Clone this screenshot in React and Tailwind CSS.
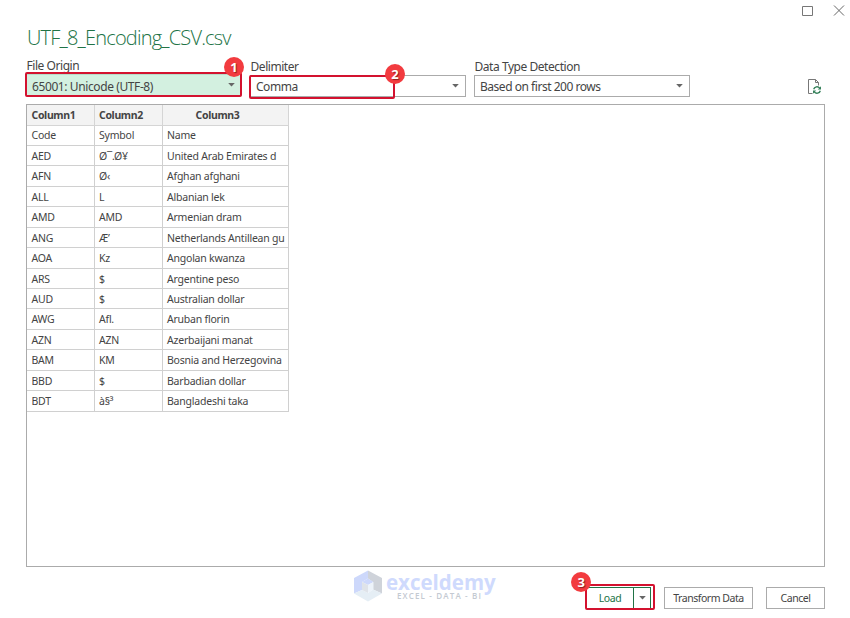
import { useState } from 'react';

const columns = ['Column1', 'Column2', 'Column3'];

const rows = [
  ['Code', 'Symbol', 'Name'],
  ['AED', 'Ø¯.Ø¥', 'United Arab Emirates d'],
  ['AFN', 'Ø‹', 'Afghan afghani'],
  ['ALL', 'L', 'Albanian lek'],
  ['AMD', 'AMD', 'Armenian dram'],
  ['ANG', 'Æ’', 'Netherlands Antillean gu'],
  ['AOA', 'Kz', 'Angolan kwanza'],
  ['ARS', '$', 'Argentine peso'],
  ['AUD', '$', 'Australian dollar'],
  ['AWG', 'Afl.', 'Aruban florin'],
  ['AZN', 'AZN', 'Azerbaijani manat'],
  ['BAM', 'KM', 'Bosnia and Herzegovina'],
  ['BBD', '$', 'Barbadian dollar'],
  ['BDT', 'à§³', 'Bangladeshi taka'],
];

function Caret() {
  return (
    <svg width="7" height="4" viewBox="0 0 7 4" className="shrink-0">
      <path d="M0.2 0h6.6L3.5 3.6z" fill="#666" />
    </svg>
  );
}

function Badge({ children, className }) {
  return (
    <span
      className={`absolute z-10 flex size-5 items-center justify-center rounded-full bg-[#f23b3f] font-['Open_Sans',sans-serif] text-[13px] font-bold leading-none text-white [text-shadow:1px_1px_1px_#8b2020] ${className}`}
    >
      {children}
    </span>
  );
}

function Field({ label, value, className, selectClass, valueClass = 'pt-px', children }) {
  return (
    <div className={`relative w-[216px] ${className}`}>
      <div className="h-4 pl-[0.5px] text-[12px] leading-4 tracking-[-0.45px]">{label}</div>
      <button
        type="button"
        className={`flex h-[22px] w-full items-center justify-between border pl-[5px] pr-[6px] text-left text-[12px] tracking-[-0.47px] ${selectClass}`}
      >
        <span className={valueClass}>{value}</span>
        <Caret />
      </button>
      {children}
    </div>
  );
}

function Logo() {
  return (
    <div className="flex items-center gap-[4.5px]">
      <svg width="28" height="32" viewBox="0 0 28 32">
        <path d="M14 0.5 0 8v15.5l8-3.5v-8l6-3.5z" fill="#cdd8fb" />
        <path d="M14 0.5 28 8v15.5l-9-4V12l-5-3.5z" fill="#cfd3da" />
        <path d="M0 23.5l8-3.5 6 3 5-3.5 9 4-14 8z" fill="#e5eef5" />
        <path d="M14 8.5l5.500 3.500L14 15l-6-3z" fill="#cdd8fb" />
        <path d="M8 12l6 3v8l-6-3z" fill="#dfe3e9" />
        <path d="M19.500 12L14 15v8l5.500-3.500z" fill="#edf3fa" />
      </svg>
      <div className="font-['Open_Sans',sans-serif]">
        <div className="h-[21px] text-[20.5px] font-bold leading-[22px] text-[#cfdafd]">exceldemy</div>
        <div className="h-[9px] pl-[11px] text-[8px] font-semibold leading-[8px] tracking-[1.15px] text-[#c4cad2]">
          EXCEL - DATA - BI
        </div>
      </div>
    </div>
  );
}

export default function App() {
  const [activeRow, setActiveRow] = useState(null);

  return (
    <div className="flex h-[618px] w-[850px] flex-col overflow-hidden bg-white pl-[26px] pr-[25px] font-['Noto_Sans','Open_Sans',sans-serif] text-[#444]">
      <div className="-mr-[20px] flex h-[22px] shrink-0 items-start justify-end gap-[20px] pt-[5px]">
        <svg width="12" height="12" viewBox="0 0 12 12" fill="none" stroke="#777">
          <path d="M1.5 1.5h10v9h-10z" />
        </svg>
        <svg width="12" height="12" viewBox="0 0 12 12" fill="none" stroke="#666">
          <path d="M1 0.5l10 10M11 0.5l-10 10" />
        </svg>
      </div>

      <h1 className="h-[36px] shrink-0 pl-px font-['Open_Sans',sans-serif] text-[20px] font-light leading-[31px] tracking-[-0.8px] text-[#217346]">
        UTF_8_Encoding_CSV.csv
      </h1>

      <div className="flex h-[46px] shrink-0 items-start gap-2">
        <Field
          label="File Origin"
          value="65001: Unicode (UTF-8)"
          selectClass="border-[#b7ddca] bg-[#d3f0e0]"
          valueClass="pt-[3px] tracking-[-0.4px]"
        >
          <span className="absolute -left-px top-[14px] h-[25px] w-[217px] rounded-[2px] border-2 border-[#d3122f]" />
          <Badge className="-top-[1px] left-[198px]">1</Badge>
        </Field>
        <Field label="Delimiter" value="Comma" className="pt-px" selectClass="border-[#ababab] bg-white">
          <span className="absolute -left-px top-[17px] h-[24px] w-[146px] rounded-[2px] border-2 border-[#d3122f]" />
          <Badge className="left-[135px] top-[6px]">2</Badge>
        </Field>
        <Field
          label="Data Type Detection"
          value="Based on first 200 rows"
          className="pt-px"
          selectClass="border-[#ababab] bg-white"
        />
        <button type="button" className="ml-auto mr-[3px] mt-[21px]" aria-label="Refresh">
          <svg width="15" height="16" viewBox="0 0 15 16" fill="none">
            <path d="M5.5 14.5h-4V.5h7l3 3v3M8.5.5v3h3" stroke="#777" />
            <path d="M6.7 10.3a3.4 3.4 0 0 1 6-1.2M13.3 11.7a3.4 3.4 0 0 1-6 1.2" stroke="#35805a" strokeWidth="1.4" />
            <path d="M14 7.2v3.2h-3.2zM6 14.8v-3.2h3.2z" fill="#35805a" />
          </svg>
        </button>
      </div>

      <div className="h-[463px] shrink-0 border border-[#ababab]">
        <table className="w-[262px] table-fixed border-separate border-spacing-0 text-[10.5px] leading-none tracking-[-0.22px]">
          <colgroup>
            <col className="w-[68px]" />
            <col className="w-[68px]" />
            <col className="w-[126px]" />
          </colgroup>
          <thead>
            <tr className="h-[20.5px] bg-[#f3f3f3]">
              {columns.map((column) => (
                <th
                  key={column}
                  className="border-b border-r border-[#d5d5d5] p-0 pl-1 pt-px text-left font-bold tracking-[-0.35px] first:pl-[4.5px] last:pl-0 last:pr-4 last:text-center"
                >
                  {column}
                </th>
              ))}
            </tr>
          </thead>
          <tbody>
            {rows.map((row, index) => (
              <tr
                key={row[0]}
                onClick={() => setActiveRow(index)}
                className={`h-[20.44px] ${activeRow === index ? 'bg-[#d3f0e0]' : ''}`}
              >
                {row.map((cell, i) => (
                  <td
                    key={i}
                    className="whitespace-nowrap border-b border-r border-[#d0d0d0] p-0 pl-1 pt-px first:pl-[4.5px]"
                  >
                    {cell}
                  </td>
                ))}
              </tr>
            ))}
          </tbody>
        </table>
      </div>

      <div className="flex h-[51px] shrink-0 items-start pl-[327.5px] text-[10.5px] tracking-[-0.45px]">
        <div className="pt-[3px] tracking-normal">
          <Logo />
        </div>
        <div className="ml-auto flex pt-[20px]">
          <div className="relative mr-[13px] flex h-[22px] w-[65px] border border-[#217346] text-[#217346]">
            <button type="button" className="w-[47px] border-r border-[#217346] pt-px">Load</button>
            <button type="button" className="flex flex-1 items-center justify-center" aria-label="Load options">
              <Caret />
            </button>
            <span className="absolute -left-[2px] -top-[4px] h-[26px] w-[70px] rounded-[2px] border-2 border-[#d3122f]" />
            <Badge className="-left-[16px] -top-[16px]">3</Badge>
          </div>
          <button type="button" className="mr-[13px] h-[22px] w-[89px] border border-[#ababab] pt-[1.5px]">
            Transform Data
          </button>
          <button type="button" className="h-[22px] w-[59px] border border-[#ababab] pt-[1.5px]">Cancel</button>
        </div>
      </div>
    </div>
  );
}
